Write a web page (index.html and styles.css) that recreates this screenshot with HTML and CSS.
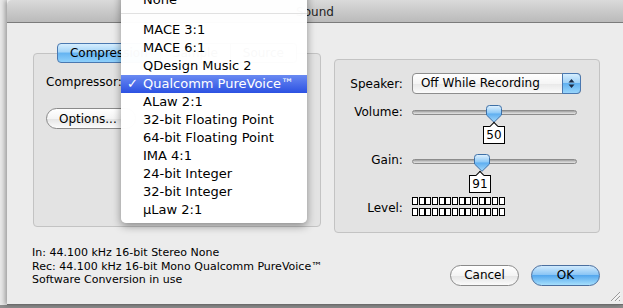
FILE: index.html
```html
<!DOCTYPE html>
<html lang="en">
<head>
    <meta charset="UTF-8" />
    <title>Sound</title>
    <link rel="stylesheet" href="styles.css">
</head>
<body>
    <div class="window">
        <div class="titlebar">Sound</div>

        <div class="content">
            <div class="panes">
                <div class="tabview">
                    <div class="tabs">
                        <span class="tab selected">Compression</span>
                        <span class="tab">Sample</span>
                        <span class="tab">Source</span>
                    </div>
                    <div class="group compression">
                        <div class="field-label">Compressor:</div>
                        <button class="pill options">Options...</button>
                    </div>
                </div>

                <div class="group sound">
                    <div class="label">Speaker:</div>
                    <div class="popup">
                        <span>Off While Recording</span>
                        <span class="popup-arrows">
                            <svg width="7" height="11" viewBox="0 0 7 11">
                                <path d="M3.5 1 L6.5 4.5 H0.5 Z" fill="#1b2a44"/>
                                <path d="M3.5 10 L6.5 6.5 H0.5 Z" fill="#1b2a44"/>
                            </svg>
                        </span>
                    </div>

                    <div class="label slider-label">Volume:</div>
                    <div class="slider-control">
                        <div class="slider">
                            <div class="track"></div>
                            <svg class="thumb" style="left: 74px" width="16" height="18" viewBox="0 0 16 18">
                                <defs>
                                    <linearGradient id="thumbFill" x1="0" y1="0" x2="0" y2="1">
                                        <stop offset="0" stop-color="#e2f2fe"/>
                                        <stop offset="0.45" stop-color="#8cc8f6"/>
                                        <stop offset="0.5" stop-color="#5eaef0"/>
                                        <stop offset="1" stop-color="#a6dafb"/>
                                    </linearGradient>
                                </defs>
                                <path d="M3.5 0.5 H12.5 Q15.5 0.5 15.5 3.5 V10 L8 17.3 L0.5 10 V3.5 Q0.5 0.5 3.5 0.5 Z" fill="url(#thumbFill)" stroke="#3d6fa6"/>
                            </svg>
                        </div>
                        <div class="tag" style="margin-left: 71px">50</div>
                    </div>

                    <div class="label slider-label gain">Gain:</div>
                    <div class="slider-control gain">
                        <div class="slider">
                            <div class="track"></div>
                            <svg class="thumb" style="left: 62px" width="16" height="18" viewBox="0 0 16 18">
                                <path d="M3.5 0.5 H12.5 Q15.5 0.5 15.5 3.5 V10 L8 17.3 L0.5 10 V3.5 Q0.5 0.5 3.5 0.5 Z" fill="url(#thumbFill)" stroke="#3d6fa6"/>
                            </svg>
                        </div>
                        <div class="tag" style="margin-left: 57px">91</div>
                    </div>

                    <div class="label level-label">Level:</div>
                    <div class="meter">
                        <div class="meter-row">
                            <span></span><span></span><span></span><span></span><span></span><span></span><span></span>
                            <span></span><span></span><span></span><span></span><span></span><span></span><span></span>
                        </div>
                        <div class="meter-row">
                            <span></span><span></span><span></span><span></span><span></span><span></span><span></span>
                            <span></span><span></span><span></span><span></span><span></span><span></span><span></span>
                        </div>
                    </div>
                </div>
            </div>

            <div class="footer">
                <div class="info">
                    In: 44.100 kHz 16-bit Stereo None<br>
                    Rec: 44.100 kHz 16-bit Mono Qualcomm PureVoice™<br>
                    Software Conversion in use
                </div>
                <div class="buttons">
                    <button class="pill">Cancel</button>
                    <button class="pill default">OK</button>
                </div>
            </div>
        </div>

        <svg class="grip" width="12" height="12" viewBox="0 0 12 12">
            <path d="M11 2 L2 11 M11 6 L6 11 M11 10 L10 11" stroke="#9a9a9a" stroke-width="1"/>
            <path d="M11.5 3 L3 11.5 M11.5 7 L7 11.5" stroke="#fafafa" stroke-width="1"/>
        </svg>

        <!-- open compressor popup menu -->
        <ul class="menu">
            <li>None</li>
            <li class="separator"></li>
            <li>MACE 3:1</li>
            <li>MACE 6:1</li>
            <li>QDesign Music 2</li>
            <li class="checked">Qualcomm PureVoice™</li>
            <li>ALaw 2:1</li>
            <li>32-bit Floating Point</li>
            <li>64-bit Floating Point</li>
            <li>IMA 4:1</li>
            <li>24-bit Integer</li>
            <li>32-bit Integer</li>
            <li>µLaw 2:1</li>
        </ul>
    </div>
</body>
</html>
```

FILE: styles.css
```css
:root {
  --window-bg: #ececec;
  --group-bg: #e3e3e3;
  --group-border: #c3c3c3;
  --text: #000;
  --menu-blue-top: #6a8af2;
  --menu-blue-bottom: #2c51e2;
}

body {
  margin: 0;
  width: 623px;
  height: 308px;
  overflow: hidden;
  font-family: "DejaVu Sans", sans-serif;
  color: var(--text);
  background: linear-gradient(to bottom, #e9e9e9 0, #e9e9e9 305px, #8f8f8f 305px);
}

.window {
  position: relative;
  margin-left: 7px;
  width: 616px;
  height: 305px;
  box-sizing: border-box;
  background-color: var(--window-bg);
  border-bottom: 1px solid #6c6c6c;
  box-shadow: -2px 0 5px rgba(0, 0, 0, 0.35);
  display: flex;
  flex-direction: column;
}

.titlebar {
  height: 22px;
  border-bottom: 1px solid #7b7b7b;
  border-top-left-radius: 5px;
  background: linear-gradient(#dadada, #bababa);
  text-align: center;
  font-size: 12px;
  line-height: 24px;
  color: #1e1e1e;
}

.content {
  flex: 1;
  padding: 20px 23px 0 25px;
  display: flex;
  flex-direction: column;
}

.panes {
  display: flex;
  align-items: flex-start;
}

/* Tab view */
.tabview {
  margin-left: 1px;
  width: 289px;
}

.tabs {
  position: relative;
  z-index: 1;
  display: flex;
  justify-content: center;
  height: 20px;
}

.tab {
  height: 20px;
  box-sizing: border-box;
  padding: 0 12px;
  font-size: 12px;
  line-height: 18px;
  border: 1px solid #8f8f8f;
  border-left: none;
  background: linear-gradient(#ffffff 0%, #f3f3f3 50%, #e6e6e6 51%, #f7f7f7 100%);
}

.tab:first-child {
  border-left: 1px solid #8f8f8f;
  border-radius: 4px 0 0 4px;
}

.tab:last-child {
  border-radius: 0 4px 4px 0;
}

.tab.selected {
  border-color: #4a78b0;
  background: linear-gradient(#d6eefe 0%, #a3d4f8 45%, #64b3f1 50%, #8ed0fb 100%);
}

.group {
  box-sizing: border-box;
  border: 1px solid var(--group-border);
  border-radius: 4px;
  background-color: var(--group-bg);
}

.group.compression {
  margin-top: -10px;
  height: 174px;
  padding: 18px 12px 0;
}

.field-label {
  font-size: 12px;
  line-height: 21px;
}

.pill {
  height: 21px;
  box-sizing: border-box;
  border: 1px solid #8a8a8a;
  border-radius: 11px;
  background: linear-gradient(#ffffff 0%, #f4f4f4 50%, #e4e4e4 51%, #fbfbfb 100%);
  font-family: "DejaVu Sans", sans-serif;
  font-size: 12px;
  color: #000;
  padding: 0;
}

.pill.options {
  margin-top: 15px;
  width: 90px;
  text-align: left;
  padding-left: 12px;
}

/* Sound group on the right */
.group.sound {
  margin-left: 13px;
  margin-top: 16px;
  width: 267px;
  height: 174px;
  padding: 13px 18px 0 9px;
  display: grid;
  grid-template-columns: 60px 1fr;
  column-gap: 8px;
  align-content: start;
}

.label {
  font-size: 12px;
  text-align: right;
  padding-right: 1px;
  align-self: center;
}

.popup {
  position: relative;
  height: 21px;
  box-sizing: border-box;
  border: 1px solid #8d8d8d;
  border-radius: 4px;
  background: linear-gradient(#ffffff 0%, #f5f5f5 50%, #e8e8e8 51%, #fbfbfb 100%);
  font-size: 12px;
  line-height: 19px;
  padding-left: 8px;
  display: flex;
  justify-content: space-between;
}

.popup-arrows {
  width: 17px;
  margin: -1px -1px -1px 0;
  border: 1px solid #4a78b0;
  border-radius: 0 4px 4px 0;
  background: linear-gradient(#d6eefe 0%, #9fd1f7 45%, #61b1f0 50%, #98d5fb 100%);
  display: flex;
  align-items: center;
  justify-content: center;
}

.slider-label {
  align-self: start;
  margin-top: 11px;
  line-height: 14px;
}

.slider-label.gain {
  margin-top: 9px;
}

.slider-control {
  margin-top: 11px;
}

.slider-control.gain {
  margin-top: 10px;
}

.slider {
  position: relative;
  height: 18px;
  width: 165px;
  padding-top: 5px;
  box-sizing: border-box;
}

.track {
  height: 5px;
  border: 1px solid #8c8c8c;
  border-radius: 4px;
  background: linear-gradient(#9d9d9d, #cfcfcf 60%, #e2e2e2);
  box-sizing: border-box;
}

.thumb {
  position: absolute;
  top: 0;
}

.tag {
  position: relative;
  margin-top: 3px;
  width: 22px;
  height: 18px;
  box-sizing: border-box;
  border: 1px solid #000;
  background: #fff;
  font-size: 12px;
  line-height: 17px;
  text-align: center;
}

.tag::before {
  content: '';
  position: absolute;
  left: 7px;
  top: -4px;
  width: 5px;
  height: 5px;
  border-top: 1px solid #000;
  border-left: 1px solid #000;
  background: #fff;
  transform: rotate(45deg);
}

.level-label {
  margin-top: 4px;
  padding-top: 3px;
}

.meter {
  margin-top: 4px;
  display: flex;
  flex-direction: column;
  gap: 3px;
}

.meter-row {
  display: flex;
  gap: 0.7px;
}

.meter-row span {
  width: 6px;
  height: 8px;
  box-sizing: border-box;
  border: 1px solid #000;
  background: #fff;
}

/* Footer */
.footer {
  margin-top: 13px;
  display: flex;
  justify-content: space-between;
  align-items: flex-end;
}

.info {
  font-size: 11px;
  line-height: 13.5px;
}

.buttons {
  display: flex;
  gap: 12px;
  margin-bottom: 1px;
}

.buttons .pill {
  width: 69px;
}

.pill.default {
  border-color: #4b6f9f;
  background: linear-gradient(#d0eafd 0%, #8cc6f5 45%, #55a8ee 50%, #a6dffc 100%);
}

.grip {
  position: absolute;
  right: 2px;
  bottom: 2px;
}

/* Popup menu */
.menu {
  position: absolute;
  left: 114px;
  top: -13px;
  width: 186px;
  margin: 0;
  padding: 4px 0;
  list-style: none;
  background: rgba(255, 255, 255, 0.975);
  border-radius: 0 0 5px 5px;
  box-shadow: 0 3px 9px rgba(0, 0, 0, 0.4);
  z-index: 10;
}

.menu li {
  height: 18px;
  line-height: 18px;
  font-size: 13px;
  padding-left: 22px;
  position: relative;
  white-space: nowrap;
}

.menu li.separator {
  padding: 0;
  box-sizing: border-box;
  height: 5px;
  margin-bottom: 7px;
  border-bottom: 1px solid #e1e1e1;
}

.menu li.checked {
  color: #fff;
  background: linear-gradient(var(--menu-blue-top), var(--menu-blue-bottom));
}

.menu li.checked::before {
  content: '✓';
  position: absolute;
  left: 6px;
}
```
